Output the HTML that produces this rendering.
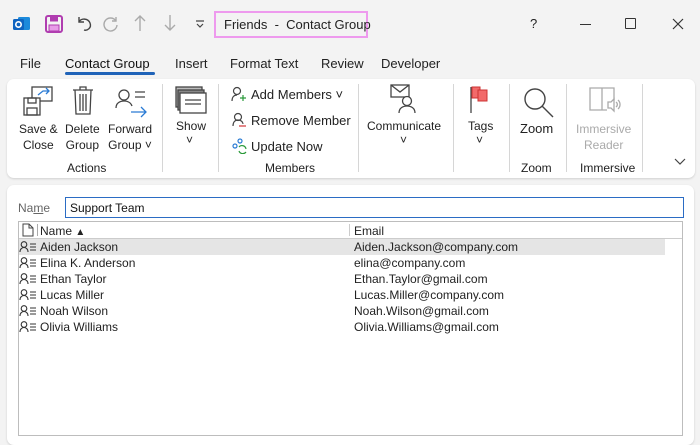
<!DOCTYPE html>
<html><head><meta charset="utf-8"><style>
*{box-sizing:border-box;margin:0;padding:0}
body{width:700px;height:431px;overflow:hidden;background:#f3f3f3;font-family:"Liberation Sans",sans-serif;color:#222;position:relative}
.a{position:absolute;white-space:nowrap}
.t{font-size:13px}
.s{font-size:12px}
.sep{position:absolute;top:84px;height:88px;width:1px;background:#d6d6d6}
.r{height:16px;position:relative;padding-left:21px}
.r svg{position:absolute;left:0;top:2px}
</style></head><body>
<svg class="a" style="left:12px;top:14px" width="20" height="20" viewBox="0 0 20 20"><rect x="6" y="3" width="12" height="13" rx="1.5" fill="#1c8adb"/><rect x="1" y="5" width="11" height="11" rx="1.5" fill="#0f64c0"/><circle cx="6.5" cy="10.5" r="2.7" fill="none" stroke="#fff" stroke-width="1.6"/></svg>
<svg class="a" style="left:45px;top:15px" width="18" height="18" viewBox="0 0 18 18"><rect x="1" y="1" width="16" height="16" rx="2" fill="none" stroke="#b03db0" stroke-width="2"/><rect x="5" y="1.5" width="8" height="5" fill="#b03db0"/><rect x="4" y="10" width="10" height="6" fill="#e89be8" stroke="#b03db0"/></svg>
<svg class="a" style="left:75px;top:14px" width="18" height="18" viewBox="0 0 18 18" fill="none" stroke="#444" stroke-width="1.4"><path d="M4 3v5h5"/><path d="M4 8c2-4 9-4 11 1s-3 8-6 7"/></svg>
<svg class="a" style="left:102px;top:14px" width="18" height="18" viewBox="0 0 18 18" fill="none" stroke="#aaa" stroke-width="1.4"><path d="M14 3v4h-4"/><path d="M14 7A6.5 6.5 0 1 0 15 11"/></svg>
<svg class="a" style="left:133px;top:14px" width="14" height="18" viewBox="0 0 14 18" fill="none" stroke="#aaa" stroke-width="1.4"><path d="M7 17V2M2 7l5-5 5 5"/></svg>
<svg class="a" style="left:163px;top:14px" width="14" height="18" viewBox="0 0 14 18" fill="none" stroke="#aaa" stroke-width="1.4"><path d="M7 1v15M2 11l5 5 5-5"/></svg>
<svg class="a" style="left:195px;top:19px" width="10" height="10" viewBox="0 0 10 10" fill="none" stroke="#444" stroke-width="1.2"><path d="M1 2h8M2 5l3 3 3-3"/></svg>
<div class="a t" style="left:214px;top:11px;width:154px;height:27px;border:2px solid #ee9aee;padding:4px 0 0 8px;color:#222">Friends &nbsp;- &nbsp;Contact Group</div>
<div class="a t" style="left:530px;top:16px">?</div>
<div class="a" style="left:580px;top:24px;width:11px;height:1px;background:#333"></div>
<div class="a" style="left:625px;top:18px;width:11px;height:11px;border:1.3px solid #333;border-radius:1px"></div>
<svg class="a" style="left:672px;top:18px" width="12" height="12" viewBox="0 0 12 12" stroke="#333" stroke-width="1.2"><path d="M1 1l10 10M11 1L1 11"/></svg>
<div class="a t" style="left:20px;top:56px">File</div>
<div class="a t" style="left:65px;top:56px;color:#111">Contact Group</div>
<div class="a" style="left:65px;top:72px;width:90px;height:3px;background:#1f63b8;border-radius:2px"></div>
<div class="a t" style="left:175px;top:56px">Insert</div>
<div class="a t" style="left:230px;top:56px">Format Text</div>
<div class="a t" style="left:321px;top:56px">Review</div>
<div class="a t" style="left:381px;top:56px">Developer</div>
<div class="a" style="left:7px;top:79px;width:688px;height:99px;background:#fff;border-radius:7px;box-shadow:0 1px 2px rgba(0,0,0,.15)"></div>
<div class="sep" style="left:162px"></div><div class="sep" style="left:218px"></div><div class="sep" style="left:358px"></div><div class="sep" style="left:453px"></div><div class="sep" style="left:509px"></div><div class="sep" style="left:566px"></div><div class="sep" style="left:642px"></div>
<svg class="a" style="left:23px;top:86px" width="32" height="32" viewBox="0 0 32 32" fill="none" stroke="#444" stroke-width="1.3"><rect x="9" y="1" width="20" height="14"/><path d="M15 9l5-4h6M23 2l3 3-3 3" stroke="#2a7bd4"/><rect x="1" y="12" width="16" height="17" fill="#fff"/><rect x="5" y="12" width="8" height="5"/><rect x="4" y="22" width="10" height="7"/></svg>
<svg class="a" style="left:72px;top:86px" width="22" height="30" viewBox="0 0 22 30" fill="none" stroke="#444" stroke-width="1.3"><path d="M1 4h20M8 4V1h6v3M3 4l1 24h14l1-24M8 8v17M11 8v17M14 8v17"/></svg>
<svg class="a" style="left:115px;top:88px" width="34" height="30" viewBox="0 0 34 30" fill="none" stroke="#444" stroke-width="1.3"><circle cx="9" cy="7" r="5"/><path d="M1 20c0-5 4-7 8-7s7 2 8 5"/><path d="M20 4h10M20 9h10"/><path d="M16 24h15M26 19l5 5-5 5" stroke="#2a7bd4"/></svg>
<div class="a s" style="left:19px;top:121px;text-align:center;line-height:16px">Save &amp;<br>Close</div>
<div class="a s" style="left:65px;top:121px;text-align:center;line-height:16px">Delete<br>Group</div>
<div class="a s" style="left:108px;top:121px;text-align:center;line-height:16px">Forward<br>Group ˅</div>
<div class="a s" style="left:67px;top:161px">Actions</div>
<svg class="a" style="left:175px;top:86px" width="32" height="28" viewBox="0 0 32 28" fill="none" stroke="#444" stroke-width="1.3"><rect x="1" y="1" width="26" height="20" fill="#bbb"/><rect x="3" y="4" width="26" height="20" fill="#888"/><rect x="5" y="7" width="26" height="20" fill="#fff"/><path d="M10 14h16M10 18h16"/></svg>
<div class="a s" style="left:176px;top:119px">Show</div>
<div class="a s" style="left:186px;top:133px">˅</div>
<svg class="a" style="left:231px;top:86px" width="16" height="16" viewBox="0 0 16 16" fill="none" stroke="#444" stroke-width="1.2"><circle cx="6" cy="5" r="3.5"/><path d="M1 15c0-4 2-6 5-6"/><path d="M12 9v6M9 12h6" stroke="#2a9a3a"/></svg>
<div class="a t" style="left:251px;top:87px">Add Members ˅</div>
<svg class="a" style="left:231px;top:112px" width="16" height="16" viewBox="0 0 16 16" fill="none" stroke="#444" stroke-width="1.2"><circle cx="7" cy="5" r="3.5"/><path d="M2 14c0-4 2-6 5-6s5 2 5 4"/><path d="M8 14h7" stroke="#d13438"/></svg>
<div class="a t" style="left:251px;top:113px">Remove Member</div>
<svg class="a" style="left:231px;top:138px" width="16" height="16" viewBox="0 0 16 16" fill="none" stroke="#2a7bd4" stroke-width="1.2"><circle cx="4" cy="8" r="2"/><circle cx="9" cy="3" r="2"/><path d="M8 9a4 4 0 0 1 7 2M15 14a4 4 0 0 1-7-1" stroke="#2a9a3a"/></svg>
<div class="a t" style="left:251px;top:139px">Update Now</div>
<div class="a s" style="left:265px;top:161px">Members</div>
<svg class="a" style="left:390px;top:84px" width="30" height="30" viewBox="0 0 30 30" fill="none" stroke="#444" stroke-width="1.3"><rect x="1" y="1" width="18" height="12"/><path d="M1 1l9 7 9-7"/><circle cx="17" cy="17" r="4.5" fill="#fff"/><path d="M9 29c0-5 4-7 8-7s8 2 8 7"/></svg>
<div class="a s" style="left:367px;top:119px">Communicate</div>
<div class="a s" style="left:400px;top:133px">˅</div>
<svg class="a" style="left:469px;top:86px" width="22" height="28" viewBox="0 0 22 28"><path d="M2 1v26" stroke="#444" stroke-width="1.3"/><rect x="3" y="1" width="8" height="11" fill="#f26a6a" stroke="#c33"/><rect x="9" y="4" width="9" height="11" fill="#f26a6a" stroke="#c33"/></svg>
<div class="a s" style="left:468px;top:119px">Tags</div>
<div class="a s" style="left:476px;top:133px">˅</div>
<svg class="a" style="left:521px;top:86px" width="34" height="32" viewBox="0 0 34 32" fill="none" stroke="#444" stroke-width="1.4"><circle cx="14" cy="13" r="10"/><path d="M21 20l11 11"/></svg>
<div class="a t" style="left:520px;top:121px">Zoom</div>
<div class="a s" style="left:521px;top:161px">Zoom</div>
<svg class="a" style="left:589px;top:87px" width="32" height="28" viewBox="0 0 32 28" fill="none" stroke="#aaa" stroke-width="1.3"><path d="M1 1h12v22H1zM13 1h12v12M13 23h5"/><path d="M19 15h3l3-3v12l-3-3h-3zM27 15a3 3 0 0 1 0 5M29 13a6 6 0 0 1 0 9"/></svg>
<div class="a s" style="left:576px;top:121px;color:#aaa;text-align:center;line-height:16px">Immersive<br>Reader</div>
<div class="a s" style="left:580px;top:161px">Immersive</div>
<svg class="a" style="left:674px;top:158px" width="12" height="8" viewBox="0 0 12 8" fill="none" stroke="#444" stroke-width="1.2"><path d="M1 1l5 5 5-5"/></svg>
<div class="a" style="left:7px;top:185px;width:687px;height:260px;background:#fff;border-radius:7px;box-shadow:0 1px 2px rgba(0,0,0,.15)"></div>
<div class="a s" style="left:18px;top:201px;color:#666">Na<u>m</u>e</div>
<div class="a s" style="left:65px;top:197px;width:619px;height:21px;border:1px solid #2b6cc4;padding:3px 0 0 4px;color:#111">Support Team</div>
<div class="a" style="left:18px;top:221px;width:665px;height:215px;border:1px solid #bdbdbd;background:#fff"></div>
<div class="a" style="left:19px;top:238px;width:663px;height:1px;background:#ccc"></div>
<svg class="a" style="left:21px;top:223px" width="14" height="14" viewBox="0 0 14 14" fill="none" stroke="#444" stroke-width="1"><path d="M2 1h6l4 4v8H2zM8 1v4h4"/></svg>
<div class="a" style="left:37px;top:224px;width:1px;height:12px;background:#aaa"></div>
<div class="a s" style="left:40px;top:224px">Name <span style="font-size:10px">▲</span></div>
<div class="a" style="left:349px;top:224px;width:1px;height:12px;background:#ccc"></div>
<div class="a s" style="left:354px;top:224px">Email</div>
<div class="a" style="left:19px;top:239px;width:646px;height:16px;background:#e5e5e5"></div>
<div class="a s" style="left:19px;top:239px;line-height:16px">
<div class="r"><svg width="18" height="12" viewBox="0 0 18 12" fill="none" stroke="#333" stroke-width="1.1"><circle cx="5" cy="3.5" r="2.8"/><path d="M1 11c0-3 2-4.5 4-4.5s4 1.5 4 4.5"/><path d="M11 3h6M11 6h6M11 9h6"/></svg>Aiden Jackson</div>
<div class="r"><svg width="18" height="12" viewBox="0 0 18 12" fill="none" stroke="#333" stroke-width="1.1"><circle cx="5" cy="3.5" r="2.8"/><path d="M1 11c0-3 2-4.5 4-4.5s4 1.5 4 4.5"/><path d="M11 3h6M11 6h6M11 9h6"/></svg>Elina K. Anderson</div>
<div class="r"><svg width="18" height="12" viewBox="0 0 18 12" fill="none" stroke="#333" stroke-width="1.1"><circle cx="5" cy="3.5" r="2.8"/><path d="M1 11c0-3 2-4.5 4-4.5s4 1.5 4 4.5"/><path d="M11 3h6M11 6h6M11 9h6"/></svg>Ethan Taylor</div>
<div class="r"><svg width="18" height="12" viewBox="0 0 18 12" fill="none" stroke="#333" stroke-width="1.1"><circle cx="5" cy="3.5" r="2.8"/><path d="M1 11c0-3 2-4.5 4-4.5s4 1.5 4 4.5"/><path d="M11 3h6M11 6h6M11 9h6"/></svg>Lucas Miller</div>
<div class="r"><svg width="18" height="12" viewBox="0 0 18 12" fill="none" stroke="#333" stroke-width="1.1"><circle cx="5" cy="3.5" r="2.8"/><path d="M1 11c0-3 2-4.5 4-4.5s4 1.5 4 4.5"/><path d="M11 3h6M11 6h6M11 9h6"/></svg>Noah Wilson</div>
<div class="r"><svg width="18" height="12" viewBox="0 0 18 12" fill="none" stroke="#333" stroke-width="1.1"><circle cx="5" cy="3.5" r="2.8"/><path d="M1 11c0-3 2-4.5 4-4.5s4 1.5 4 4.5"/><path d="M11 3h6M11 6h6M11 9h6"/></svg>Olivia Williams</div></div>
<div class="a s" style="left:354px;top:239px;line-height:16px">
<div>Aiden.Jackson@company.com</div><div>elina@company.com</div><div>Ethan.Taylor@gmail.com</div><div>Lucas.Miller@company.com</div><div>Noah.Wilson@gmail.com</div><div>Olivia.Williams@gmail.com</div></div>
</body></html>
